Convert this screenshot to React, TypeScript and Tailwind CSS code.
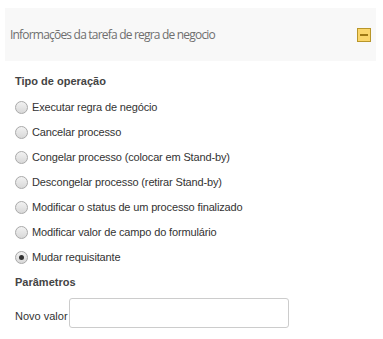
const OPTIONS = [
  "Executar regra de negócio",
  "Cancelar processo",
  "Congelar processo (colocar em Stand-by)",
  "Descongelar processo (retirar Stand-by)",
  "Modificar o status de um processo finalizado",
  "Modificar valor de campo do formulário",
  "Mudar requisitante",
];

function Radio({ checked }: { checked?: boolean }) {
  return (
    <span className="w-[13px] h-[13px] rounded-full border border-[#a9a9a9] bg-gradient-to-b from-[#f2f2f2] to-[#d8d8d8] flex items-center justify-center shrink-0">
      {checked && <span className="w-[5px] h-[5px] rounded-full bg-[#333]" />}
    </span>
  );
}

export default function App() {
  return (
    <div className="w-[383px] h-[339px] bg-white pt-2 px-[5px]" style={{ fontFamily: '"Liberation Sans", Arial, sans-serif' }}>
      {/* Header */}
      <div className="w-[371px] h-[53px] bg-[#f8f8f8] flex items-center justify-between pl-[5px] pr-[5px]">
        <span className="text-[12px] tracking-[-0.8px] text-[#6f6f6f]" style={{ fontFamily: '"Open Sans", sans-serif' }}>
          Informações da tarefa de regra de negocio
        </span>
        <span className="w-[14px] h-[14px] border border-[#b8962a] bg-[#fbd66a] flex items-center justify-center">
          <span className="w-[8px] h-[2px] bg-[#a07a14]" />
        </span>
      </div>

      {/* Body */}
      <div className="pl-[10px] pt-[10px] text-[11px] text-[#333]">
        <div className="font-bold text-[#444] h-[20px] flex items-center">Tipo de operação</div>
        <div className="flex flex-col mt-[4px]">
          {OPTIONS.map((o, i) => (
            <label key={o} className="h-[25px] flex items-center gap-[4px]">
              <Radio checked={i === OPTIONS.length - 1} />
              <span className="tracking-[-0.15px]">{o}</span>
            </label>
          ))}
        </div>
        <div className="font-bold text-[#444] h-[25px] flex items-center">Parâmetros</div>
        <div className="flex items-end mt-[3px]">
          <span className="mb-[4px]">Novo valor</span>
          <input className="ml-[1px] w-[220px] h-[30px] border border-[#ccc] rounded-[3px] bg-white outline-none" />
        </div>
      </div>
    </div>
  );
}
